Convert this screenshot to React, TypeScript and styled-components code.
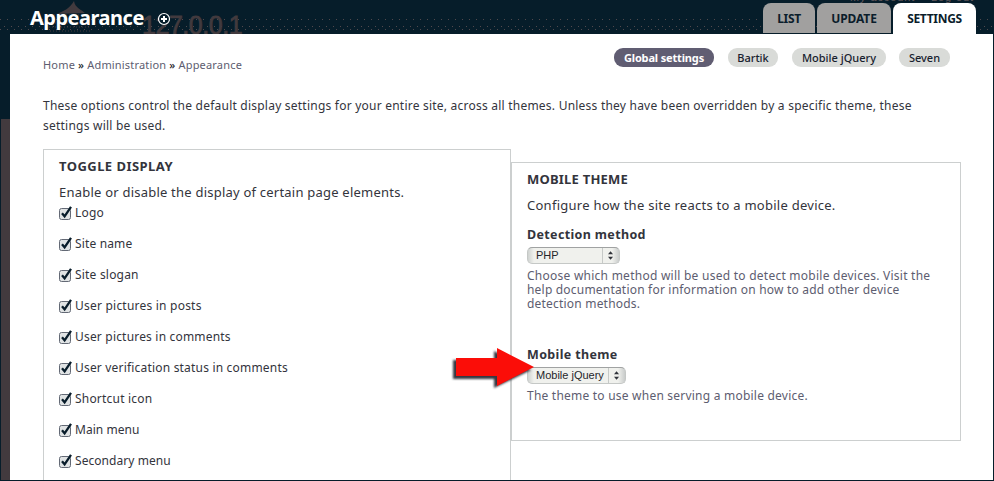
import React from 'react';
import styled, { createGlobalStyle } from 'styled-components';

const Global = createGlobalStyle`
  *, *::before, *::after { box-sizing: border-box; }
  html, body { margin: 0; padding: 0; overflow: hidden; }
  h1, h2, h3, p { margin: 0; font-weight: inherit; }
`;

const navy = '#061d2a';
const brown = '#423a3e';
const line = '#cccfcf';

const Window = styled.div`
  position: relative;
  width: 994px;
  height: 481px;
  overflow: hidden;
  display: flex;
  flex-direction: column;
  background: ${navy};
  font-family: 'Noto Sans', 'Open Sans', sans-serif;
  color: #33343c;
`;

const Header = styled.header`
  position: relative;
  height: 34px;
  flex: none;
  display: flex;
  justify-content: space-between;
  padding: 3px 18px 0 30px;
  overflow: hidden;
  background:
    linear-gradient(90deg, #51494d 1px, transparent 1px) 0 19px / 7px 1px repeat-x,
    linear-gradient(90deg, #51494d 1px, transparent 1px) 4px 26px / 7px 1px repeat-x,
    linear-gradient(90deg, #51494d 1px, transparent 1px) 0 29px / 7px 1px repeat-x,
    ${navy};
`;

const SiteBehind = styled.div`
  position: absolute;
  left: 142px;
  top: 11px;
  font: 25px/28px 'Liberation Sans', sans-serif;
  letter-spacing: -0.45px;
  color: ${brown};
  -webkit-text-stroke: 0.8px ${brown};
`;

const DropBehind = styled.svg`
  position: absolute;
  left: 48px;
  top: 0;
`;

const LinksBehind = styled.div`
  position: absolute;
  left: 850px;
  top: -9px;
  font: 11px/13px 'Liberation Sans', sans-serif;
  letter-spacing: 0.9px;
  color: #62595d;
  white-space: pre;
`;

const TitleArea = styled.div`
  position: relative;
  display: flex;
  align-items: flex-start;
`;

const Title = styled.h1`
  width: 127px;
  margin-top: 1px;
  font-size: 20px;
  line-height: 28px;
  font-weight: 700;
  letter-spacing: -0.5px;
  color: #fff;
`;

const AddIcon = styled.svg`
  margin-top: 9px;
`;

const Tabs = styled.nav`
  position: relative;
  display: flex;
  gap: 2px;
`;

const Tab = styled.a<{ $width: number; $active?: boolean; $spacing: number }>`
  width: ${p => p.$width}px;
  height: ${p => (p.$active ? 31 : 30)}px;
  border-radius: 8px 8px 0 0;
  background: ${p => (p.$active ? '#fff' : '#a1a09f')};
  color: #0b1d2b;
  font-size: 12px;
  line-height: 31px;
  font-weight: 700;
  letter-spacing: ${p => p.$spacing}px;
  text-align: center;
`;

const Body = styled.div`
  flex: 1;
  min-height: 0;
  display: flex;
  padding: 0 1px 1px;
`;

const SideStrip = styled.div`
  width: 9px;
  flex: none;
  background: linear-gradient(${navy} 85px, ${brown} 85px);
`;

const Page = styled.main`
  flex: 1;
  padding: 14px 32px 0 33px;
  overflow: hidden;
  background: #fff;
`;

const TopRow = styled.div`
  height: 48px;
  display: flex;
  justify-content: space-between;
`;

const Crumbs = styled.div`
  margin-top: 8px;
  font-size: 11px;
  line-height: 18px;
  letter-spacing: 0.18px;
  color: #5d5d70;
  b { font-weight: 500; color: #1c1c28; }
`;

const Pills = styled.nav`
  display: flex;
  margin-right: 11px;
`;

const Pill = styled.a<{ $width: number; $gap: number; $active?: boolean; $spacing: number }>`
  width: ${p => p.$width}px;
  height: 19px;
  margin-left: ${p => p.$gap}px;
  border-radius: 9px;
  background: ${p => (p.$active ? '#605d72' : '#d9dbd8')};
  color: ${p => (p.$active ? '#fff' : '#17212e')};
  font-size: 11px;
  line-height: 20px;
  font-weight: ${p => (p.$active ? 700 : 500)};
  letter-spacing: ${p => p.$spacing}px;
  text-align: center;
  white-space: nowrap;
`;

const Text = styled.p<{ $size?: number; $line: number; $spacing?: number; $top?: number; $muted?: boolean; $bold?: boolean }>`
  margin-top: ${p => p.$top ?? 0}px;
  font-size: ${p => p.$size ?? 12}px;
  line-height: ${p => p.$line}px;
  letter-spacing: ${p => p.$spacing ?? 0}px;
  font-weight: ${p => (p.$bold ? 700 : 400)};
  color: ${p => (p.$muted ? '#5d5d70' : '#33343c')};
  white-space: nowrap;
`;

const Columns = styled.div`
  display: flex;
  align-items: flex-start;
  margin-top: 13px;
`;

const TogglePanel = styled.section`
  width: 468px;
  height: 345px;
  border: 1px solid ${line};
  padding: 6px 15px;
`;

const MobilePanel = styled.section`
  width: 450px;
  height: 279px;
  margin-top: 13px;
  border: 1px solid ${line};
  padding: 6px 15px;
`;

const Options = styled.div`
  margin-top: 2px;
`;

const Option = styled.label<{ $spacing: number }>`
  height: 31px;
  display: flex;
  align-items: flex-start;
  gap: 2px;
  font-size: 12px;
  line-height: 18px;
  letter-spacing: ${p => p.$spacing}px;
  white-space: nowrap;
  svg { flex: none; margin-top: 1px; }
`;

const SelectBox = styled.div<{ $width: number }>`
  width: ${p => p.$width}px;
  height: 17px;
  display: flex;
  justify-content: space-between;
  border: 1px solid #c5c8c6;
  border-top-color: #a0a2a2;
  border-radius: 5px;
  padding-left: 8px;
  background: linear-gradient(90deg, #cfd2d0, #f0f1ed 6px, #f0f1ed calc(100% - 7px), #c9cccb);
  font: 11px/15px 'Liberation Sans', sans-serif;
  letter-spacing: 0;
  color: #25262b;
  svg { border-left: 1px solid #c6c9c7; }
`;

const Arrow = styled.svg`
  position: absolute;
  left: 446px;
  top: 343px;
`;

function Check() {
  return (
    <svg width="14" height="16" viewBox="0 0 14 16">
      <rect x="0.5" y="3.5" width="11" height="11" rx="2" fill="#e0e3e4" stroke="#636975" />
      <path d="M3 8.2 L5.6 11.3 L12 1.8" fill="none" stroke="#081c2a" strokeWidth="2.3" />
    </svg>
  );
}

function Select({ width, children }: { width: number; children: string }) {
  return (
    <SelectBox $width={width}>
      <span>{children}</span>
      <svg width="17" height="15" viewBox="0 0 17 15">
        <path d="M5.3 6.3 L8 3 L10.7 6.3Z M5.3 8.7 L8 12 L10.7 8.7Z" fill="#30333a" />
      </svg>
    </SelectBox>
  );
}

const options: [string, number][] = [
  ['Logo', 0.2],
  ['Site name', 0.15],
  ['Site slogan', 0.2],
  ['User pictures in posts', 0.22],
  ['User pictures in comments', 0.19],
  ['User verification status in comments', 0.19],
  ['Shortcut icon', 0.2],
  ['Main menu', 0.03],
  ['Secondary menu', 0.06],
];

export default function App() {
  return (
    <>
      <Global />
      <Window>
        <Header>
          <DropBehind width="44" height="34" viewBox="0 0 44 34">
            <path d="M26 1 C27 8 34 10 37 13 L8 14 C15 12 22 8 26 1Z" fill={brown} />
            <path d="M6 15H37M3 19H40M1 23H42M1 27H42M2 31H42" stroke={brown} strokeDasharray="1 2" />
          </DropBehind>
          <SiteBehind>127.0.0.1</SiteBehind>
          <LinksBehind>My account    Log out</LinksBehind>
          <TitleArea>
            <Title>Appearance</Title>
            <AddIcon width="14" height="14" viewBox="0 0 14 14">
              <circle cx="7" cy="7" r="5.5" fill={navy} stroke="#fff" strokeWidth="1.2" />
              <path d="M7 4V10M4 7H10" stroke="#fff" strokeWidth="2" />
            </AddIcon>
          </TitleArea>
          <Tabs>
            <Tab $width={52} $spacing={-0.3}>LIST</Tab>
            <Tab $width={74} $spacing={-0.1}>UPDATE</Tab>
            <Tab $width={83} $spacing={-0.3} $active>SETTINGS</Tab>
          </Tabs>
        </Header>
        <Body>
          <SideStrip />
          <Page>
            <TopRow>
              <Crumbs>Home <b>»</b> Administration <b>»</b> Appearance</Crumbs>
              <Pills>
                <Pill $width={100} $gap={0} $spacing={-0.15} $active>Global settings</Pill>
                <Pill $width={50} $gap={14} $spacing={0}>Bartik</Pill>
                <Pill $width={94} $gap={14} $spacing={0}>Mobile jQuery</Pill>
                <Pill $width={51} $gap={13} $spacing={0}>Seven</Pill>
              </Pills>
            </TopRow>
            <Text $line={20} $spacing={0.226}>
              These options control the default display settings for your entire site, across all themes. Unless they have been overridden by a specific theme, these
            </Text>
            <Text $line={20} $spacing={0.226}>settings will be used.</Text>
            <Columns>
              <TogglePanel>
                <Text as="h2" $size={13} $line={20} $bold $spacing={0.45}>TOGGLE DISPLAY</Text>
                <Text $size={13} $line={20} $top={6} $spacing={0.22}>Enable or disable the display of certain page elements.</Text>
                <Options>
                  {options.map(([name, spacing]) => (
                    <Option key={name} $spacing={spacing}><Check />{name}</Option>
                  ))}
                </Options>
              </TogglePanel>
              <MobilePanel>
                <Text as="h2" $size={13} $line={20} $bold $spacing={0.22}>MOBILE THEME</Text>
                <Text $size={13} $line={20} $top={6} $spacing={0.26}>Configure how the site reacts to a mobile device.</Text>
                <Text as="h3" $size={12.5} $line={20} $top={10} $bold $spacing={0.35}>Detection method</Text>
                <Text as="div" $line={17} $top={2}><Select width={93}>PHP</Select></Text>
                <Text $line={14} $top={5} $muted $spacing={0.25}>Choose which method will be used to detect mobile devices. Visit the</Text>
                <Text $line={14} $muted $spacing={0.2}>help documentation for information on how to add other device</Text>
                <Text $line={14} $muted $spacing={0.2}>detection methods.</Text>
                <Text as="h3" $size={12.5} $line={20} $top={34} $bold $spacing={0.35}>Mobile theme</Text>
                <Text as="div" $line={17} $top={2}><Select width={99}>Mobile jQuery</Select></Text>
                <Text $line={14} $top={5} $muted $spacing={0.22}>The theme to use when serving a mobile device.</Text>
              </MobilePanel>
            </Columns>
          </Page>
        </Body>
        <Arrow width="96" height="50" viewBox="0 0 96 50">
          <defs>
            <filter id="soft" x="-10%" y="-20%" width="120%" height="140%"><feGaussianBlur stdDeviation="1.3" /></filter>
          </defs>
          <path d="M7 17H48V8L85 27L48 45V36H7Z" fill="#343943" filter="url(#soft)" />
          <path d="M10 15H51V5L88 24L51 43V33H10Z" fill="#fb0d08" />
        </Arrow>
      </Window>
    </>
  );
}
